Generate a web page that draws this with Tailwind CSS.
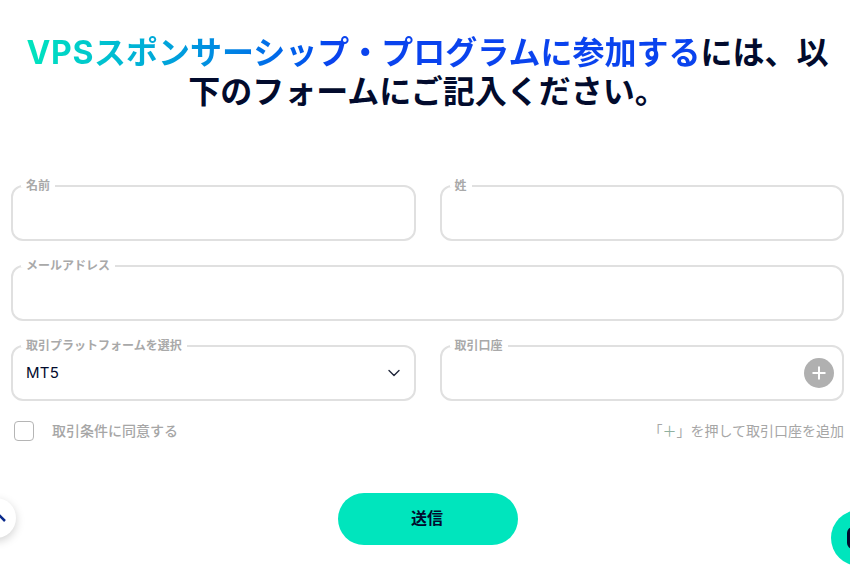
<!DOCTYPE html>
<html lang="ja">
<head>
<meta charset="utf-8">
<script src="https://cdn.jsdelivr.net/npm/@tailwindcss/browser@4"></script>
</head>
<body class="bg-white overflow-hidden">
<div class="relative w-[850px] h-[570px] overflow-hidden font-['Inter','Noto_Sans_CJK_JP',sans-serif] pl-[11px] pr-1.5">
  <h1 class="pt-[33px] text-center text-[32px] leading-[39px] font-bold text-[#020b2d] whitespace-nowrap">
    <span class="bg-linear-to-r from-[#00e5bd] to-[#0a43ee] to-45% bg-clip-text text-transparent"><span class="tracking-[0.6px]">VPS</span>スポンサーシップ・プログラムに参加する</span>には、以<br>下のフォームにご記入ください。
  </h1>
  <form class="mt-[74px] grid grid-cols-2 gap-x-6 gap-y-6">
    <fieldset class="h-[56px] border-2 border-[#e0e0e0] rounded-xl px-2 min-w-0">
      <legend class="px-[5px] text-[12px] leading-[1px] font-semibold text-[#a9a9a9] -translate-y-px">名前</legend>
    </fieldset>
    <fieldset class="h-[56px] border-2 border-[#e0e0e0] rounded-xl px-2 min-w-0">
      <legend class="px-[5px] text-[12px] leading-[1px] font-semibold text-[#a9a9a9] -translate-y-px">姓</legend>
    </fieldset>
    <fieldset class="col-span-2 h-[56px] border-2 border-[#e0e0e0] rounded-xl px-2 min-w-0">
      <legend class="px-[5px] text-[12px] leading-[1px] font-semibold text-[#a9a9a9] -translate-y-px">メールアドレス</legend>
    </fieldset>
    <fieldset class="h-[56px] border-2 border-[#e0e0e0] rounded-xl px-2 min-w-0">
      <legend class="px-[5px] text-[12px] leading-[1px] font-semibold text-[#a9a9a9] -translate-y-px">取引プラットフォームを選択</legend>
      <div class="flex items-center justify-between h-[52px] pl-[5px] pr-1.5 text-[15px] text-[#020b2d]">
        <span class="tracking-[0.2px]">MT5</span>
        <svg class="w-3 h-3" viewBox="0 0 12 12" fill="none" stroke="#20263a" stroke-width="1.4" stroke-linecap="round" stroke-linejoin="round"><path d="M1 3.5l5 5 5-5"/></svg>
      </div>
    </fieldset>
    <fieldset class="h-[56px] border-2 border-[#e0e0e0] rounded-xl px-2 min-w-0">
      <legend class="px-[5px] text-[12px] leading-[1px] font-semibold text-[#a9a9a9] -translate-y-px">取引口座</legend>
      <div class="flex items-center justify-end h-[52px]">
        <span class="flex items-center justify-center w-[30px] h-[30px] rounded-full bg-[#b0b0b0]">
          <svg class="w-[14px] h-[14px]" viewBox="0 0 14 14" stroke="#fff" stroke-width="2"><path d="M7 0.5v13M0.5 7h13"/></svg>
        </span>
      </div>
    </fieldset>
  </form>
  <div class="mt-5 flex items-center justify-between h-5">
    <label class="flex items-center gap-[18px] pl-[3px]">
      <span class="w-5 h-5 rounded-[4px] border border-[#b5b5b5] bg-white"></span>
      <span class="text-[14px] font-medium text-[#a6a6a6] -translate-y-px">取引条件に同意する</span>
    </label>
    <span class="text-[14px] text-[#a6a6a6] -translate-y-px">「<span class="text-[#8fb09f]">＋</span>」を押して取引口座を追加</span>
  </div>
  <div class="mt-[52px] flex justify-center">
    <button type="button" class="w-[180px] h-[52px] pb-0.5 pr-0.5 rounded-full bg-[#00e5bd] text-[16px] font-bold text-[#020b2d] ml-px">送信</button>
  </div>
  <div class="absolute left-[-24px] top-[498px] w-10 h-10 rounded-full bg-white shadow-[0_3px_10px_rgba(0,0,0,0.18)] flex items-center justify-end pr-[10px]">
    <svg class="w-3 h-3" viewBox="0 0 12 12" fill="none" stroke="#0a2a8c" stroke-width="2.5"><path d="M1 9l5-5 5 5"/></svg>
  </div>
  <div class="absolute left-[831px] top-[510px] w-14 h-14 rounded-full bg-[#00e5bd] flex items-center pl-4">
    <span class="w-6 h-[22px] rounded-[6px] bg-[#020b2d]"></span>
  </div>
</div>
</body>
</html>
